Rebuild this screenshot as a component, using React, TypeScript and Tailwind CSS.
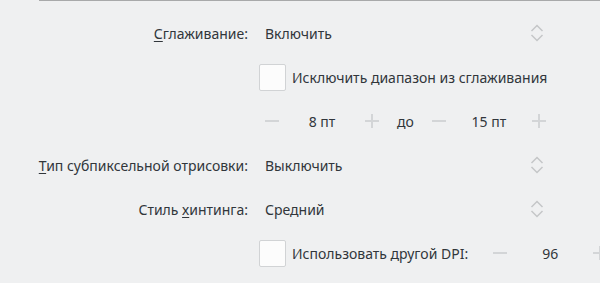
function Chevrons() {
  return (
    <svg width="14" height="20" viewBox="0 0 14 20" fill="none" className="text-[#c4c6c8]">
      <path d="M1.5 8L7 2.5L12.5 8" stroke="currentColor" strokeWidth="1.5" />
      <path d="M1.5 12L7 17.5L12.5 12" stroke="currentColor" strokeWidth="1.5" />
    </svg>
  );
}

function Minus() {
  return <div className="w-[14px] h-[2px] bg-[#d3d5d7] shrink-0" />;
}

function Plus() {
  return (
    <div className="relative w-[14px] h-[14px] shrink-0">
      <div className="absolute left-0 top-[6px] w-[14px] h-[2px] bg-[#d3d5d7]" />
      <div className="absolute top-0 left-[6px] w-[2px] h-[14px] bg-[#d3d5d7]" />
    </div>
  );
}

function Combo({ value }: { value: string }) {
  return (
    <div className="flex items-center justify-between w-[292px] pl-[6px] pr-[7px]">
      <span>{value}</span>
      <Chevrons />
    </div>
  );
}

function Spin({ value, width = 126 }: { value: string; width?: number }) {
  return (
    <div className="flex items-center justify-between px-[6px] shrink-0" style={{ width }}>
      <Minus />
      <span>{value}</span>
      <Plus />
    </div>
  );
}

function Check({ label }: { label: string }) {
  return (
    <div className="flex items-center gap-[6px] shrink-0">
      <div className="w-[27px] h-[27px] bg-[#fcfcfc] border border-[#d1d3d5] rounded-[2px]" />
      <span>{label}</span>
    </div>
  );
}

function Row({ label, children }: { label?: React.ReactNode; children: React.ReactNode }) {
  return (
    <div className="flex items-center h-[44px]">
      <div className="w-[248px] shrink-0 text-right">{label}</div>
      <div className="ml-[11px] flex items-center shrink-0">{children}</div>
    </div>
  );
}

export default function App() {
  return (
    <div
      className="w-[600px] h-[283px] overflow-hidden bg-[#eff0f1] text-[#31363b] text-[14px] whitespace-nowrap"
      style={{ fontFamily: '"Noto Sans", "DejaVu Sans", sans-serif' }}
    >
      <div className="ml-[39px] h-px bg-[#a8a9aa]" />
      <div className="pt-[10px]">
        <Row
          label={
            <span>
              <span className="underline underline-offset-[2px] decoration-1">С</span>глаживание:
            </span>
          }
        >
          <Combo value="Включить" />
        </Row>
        <Row>
          <Check label="Исключить диапазон из сглаживания" />
        </Row>
        <Row>
          <Spin value="8 пт" />
          <span className="mx-[12px]">до</span>
          <Spin value="15 пт" />
        </Row>
        <Row
          label={
            <span>
              <span className="underline underline-offset-[2px] decoration-1">Т</span>ип субпиксельной отрисовки:
            </span>
          }
        >
          <Combo value="Выключить" />
        </Row>
        <Row
          label={
            <span>
              Стиль <span className="underline underline-offset-[2px] decoration-1">х</span>интинга:
            </span>
          }
        >
          <Combo value="Средний" />
        </Row>
        <Row>
          <Check label="Использовать другой DPI:" />
          <div className="ml-[19px] shrink-0">
            <Spin value="96" width={126} />
          </div>
        </Row>
      </div>
    </div>
  );
}
